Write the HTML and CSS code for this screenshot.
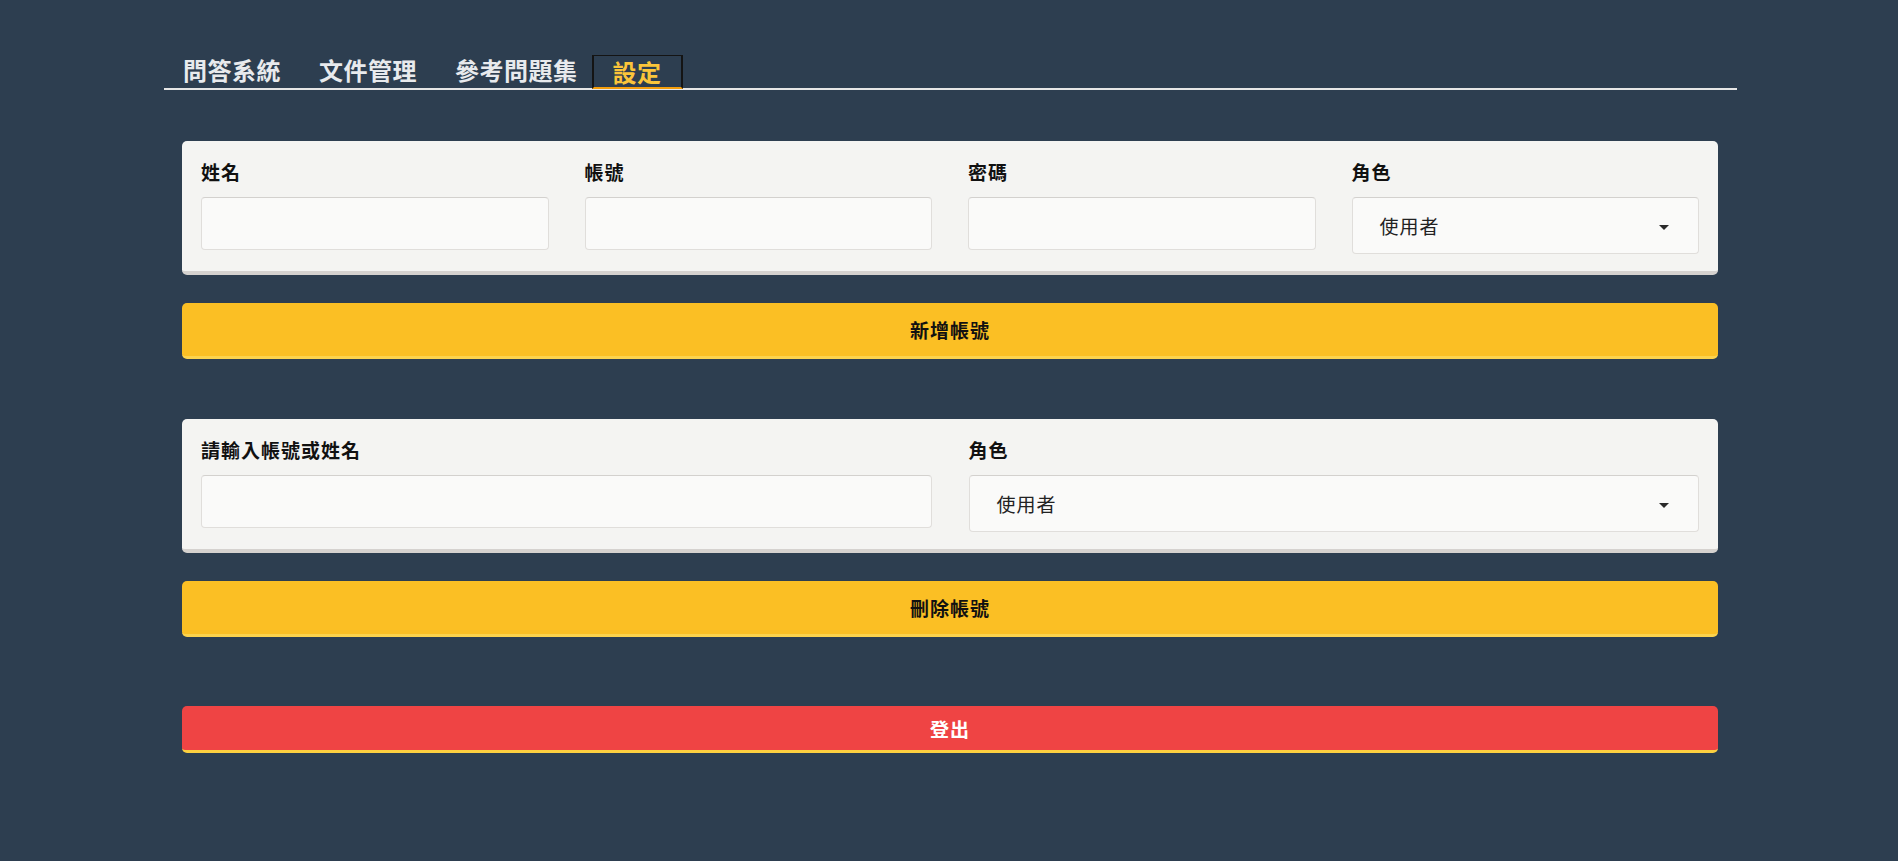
FILE: index.html
```html
<!DOCTYPE html>
<html lang="zh-Hant">
<head>
<meta charset="utf-8">
<title>設定</title>
<link rel="stylesheet" href="styles.css">
</head>
<body>
<div class="page">
  <nav class="tabs">
    <div class="tab">問答系統</div>
    <div class="tab">文件管理</div>
    <div class="tab">參考問題集</div>
    <div class="tab active">設定</div>
  </nav>

  <div class="content">
    <section class="card">
      <div class="grid four">
        <div class="field">
          <label class="label">姓名</label>
          <input class="input" type="text">
        </div>
        <div class="field">
          <label class="label">帳號</label>
          <input class="input" type="text">
        </div>
        <div class="field">
          <label class="label">密碼</label>
          <input class="input" type="password">
        </div>
        <div class="field">
          <label class="label">角色</label>
          <div class="select">
            <span class="select-text">使用者</span>
            <svg class="caret" width="10" height="5" viewBox="0 0 10 5"><path d="M0 0H10L5 5Z" fill="#2a2a2a"/></svg>
          </div>
        </div>
      </div>
    </section>
    <button class="btn btn-yellow btn-first">新增帳號</button>

    <section class="card card-second">
      <div class="grid two">
        <div class="field">
          <label class="label">請輸入帳號或姓名</label>
          <input class="input" type="text">
        </div>
        <div class="field">
          <label class="label">角色</label>
          <div class="select">
            <span class="select-text">使用者</span>
            <svg class="caret" width="10" height="5" viewBox="0 0 10 5"><path d="M0 0H10L5 5Z" fill="#2a2a2a"/></svg>
          </div>
        </div>
      </div>
    </section>
    <button class="btn btn-yellow btn-first">刪除帳號</button>

    <button class="btn btn-red">登出</button>
  </div>
</div>
</body>
</html>
```

FILE: styles.css
```css
* { box-sizing: border-box; }

html, body {
  margin: 0;
  padding: 0;
  background: #2d3e50;
  font-family: "Noto Sans CJK TC", "Noto Sans", sans-serif;
  letter-spacing: 1px;
}

.page {
  width: 1573px;
  margin-left: 164px;
  padding-top: 54px;
  padding-bottom: 40px;
}

.tabs {
  display: flex;
  align-items: flex-end;
  border-bottom: 2px solid #e6e6e6;
}

.tab {
  height: 34px;
  padding: 0 19px;
  border: 0;
  font-size: 24px;
  font-weight: 700;
  line-height: 32px;
  letter-spacing: 0.5px;
  color: #e8eaed;
  white-space: nowrap;
}

.tab.active {
  margin-left: -5px;
  padding: 0 19px;
  border: 2px solid #141414;
  border-top-width: 1px;
  border-bottom: 2px solid #f59e0b;
  color: #fbc53a;
  margin-bottom: -1px;
}

.content {
  padding: 0 19px 0 18px;
}

.card {
  margin-top: 51px;
  padding: 19px 19px 17px;
  background: #f4f4f2;
  border-radius: 5px;
  border-bottom: 4px solid #d5d2cf;
}

.card-second {
  margin-top: 60px;
}

.grid {
  display: grid;
  align-items: start;
}

.grid.four {
  grid-template-columns: repeat(4, 1fr);
  column-gap: 36px;
}

.grid.two {
  grid-template-columns: repeat(2, 1fr);
  column-gap: 37px;
}

.field {
  display: flex;
  flex-direction: column;
}

.label {
  display: block;
  font-size: 19px;
  font-weight: 700;
  line-height: 24px;
  color: #111;
  margin-bottom: 13px;
}

.input {
  display: block;
  width: 100%;
  height: 53px;
  margin: 0;
  padding: 0 16px;
  background: #fafaf9;
  border: 1px solid #e0dedb;
  border-top-color: #d3d1ce;
  border-radius: 4px;
  font: inherit;
  font-size: 19px;
  outline: none;
}

.select {
  position: relative;
  display: flex;
  align-items: center;
  height: 57px;
  padding: 0 29px 0 27px;
  background: #fafaf9;
  border: 1px solid #e0dedb;
  border-top-color: #d3d1ce;
  border-radius: 4px;
}

.select-text {
  flex: 1;
  font-size: 19px;
  line-height: 24px;
  color: #222;
}

.caret {
  display: block;
  margin-top: 3px;
}

.btn {
  display: block;
  width: 100%;
  margin: 28px 0 0;
  padding: 0;
  border: 0;
  border-radius: 5px;
  font-family: inherit;
  font-size: 19px;
  font-weight: 700;
  letter-spacing: 1px;
  cursor: pointer;
}

.btn-yellow {
  height: 56px;
  background: #fbbf24;
  border-bottom: 3px solid #fcd34d;
  color: #111;
}

.btn-red {
  margin-top: 69px;
  height: 47px;
  background: #ef4444;
  border-bottom: 3px solid #fcd040;
  color: #fff;
}
```
